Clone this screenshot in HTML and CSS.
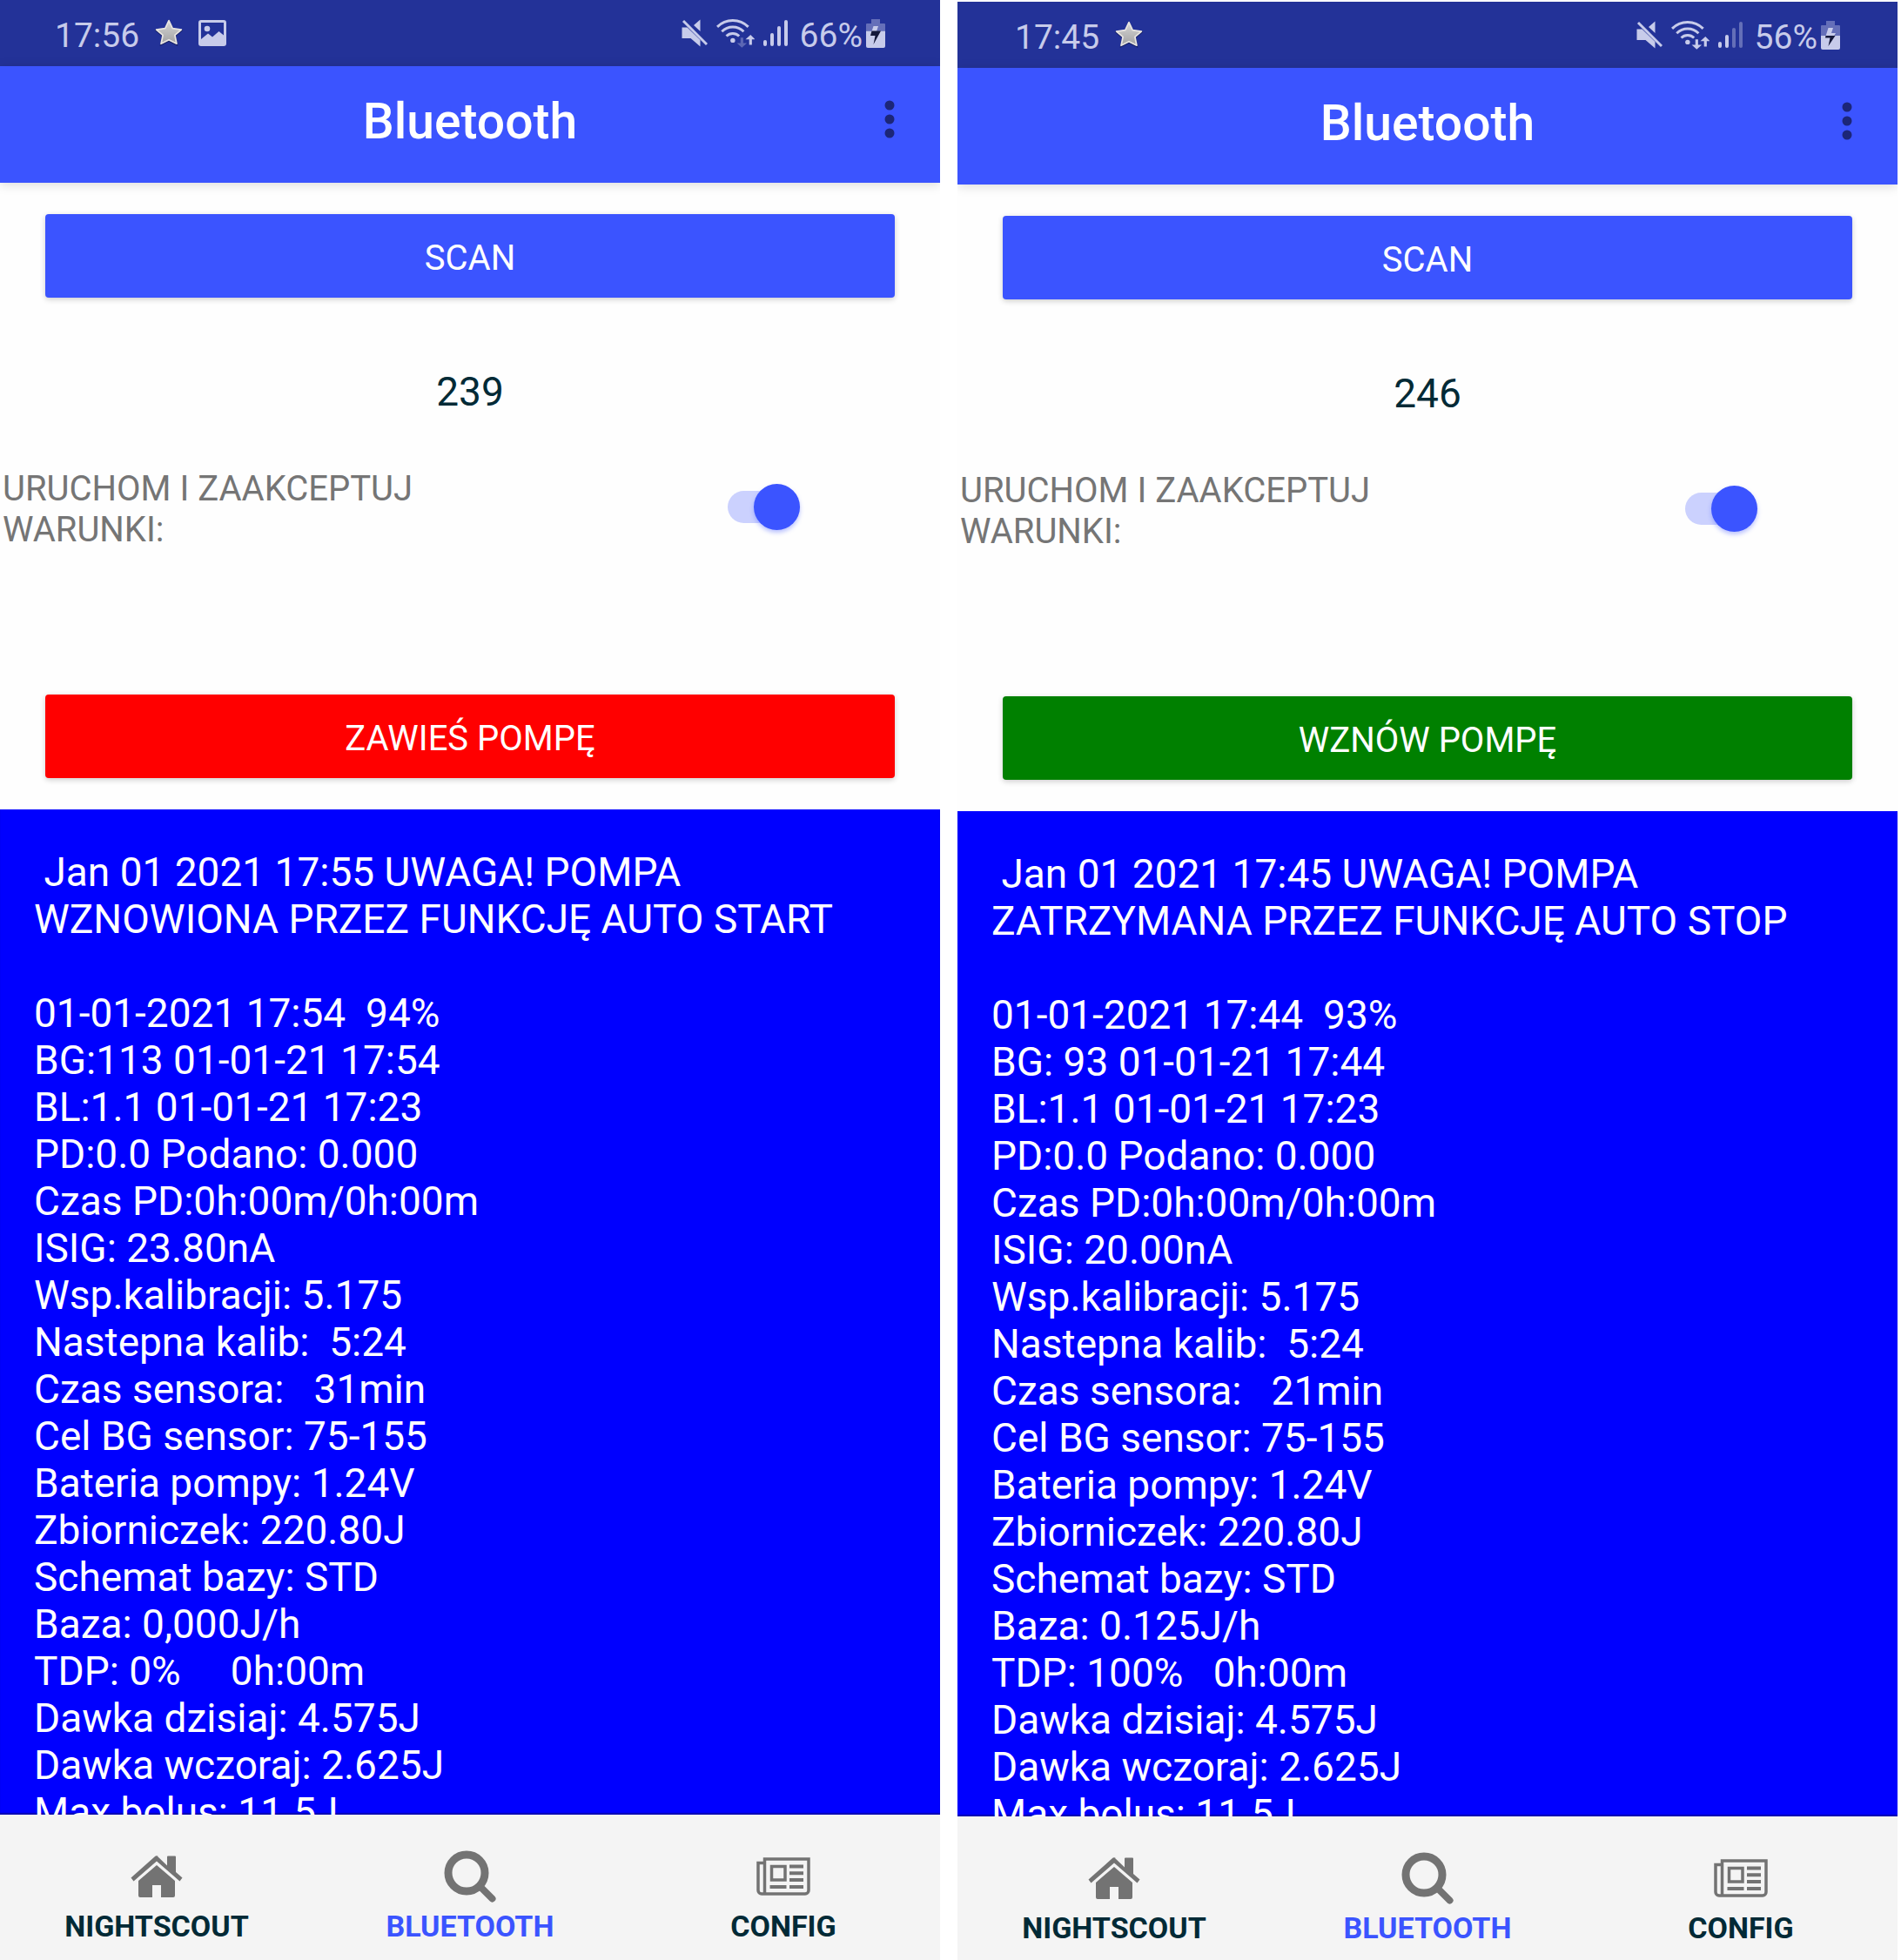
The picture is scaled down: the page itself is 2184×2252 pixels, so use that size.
FILE: index.html
```html
<!DOCTYPE html>
<html lang="pl">
<head>
<meta charset="utf-8">
<meta name="viewport" content="width=device-width, initial-scale=1">
<title>Bluetooth</title>
<link rel="stylesheet" href="styles.css">
</head>
<body>
<svg class="defs" aria-hidden="true">
  <defs>
    <linearGradient id="silver" x1="0" y1="0" x2="0" y2="1"><stop offset="0" stop-color="#d6d6d6"/><stop offset="1" stop-color="#a2a2a2"/></linearGradient>
    <symbol id="star" viewBox="1 1 30 30">
      <path d="M16 3l4.200 8.600 9.800 1.400-7.200 6.200 1.900 9.600L16 24.400l-8.700 4.400 1.900-9.600L2 13l9.800-1.400z" fill="#10184f" stroke="#10184f" stroke-width="1.500" opacity=".7"/>
      <path d="M16 2.500l4 8.500 9.500 1.300-7 6 1.900 9.200L16 23.200l-8.400 4.300 1.900-9.200-7-6L12 11z" fill="url(#silver)" stroke="#e9e6e2" stroke-width="1.600" stroke-linejoin="round"/>
    </symbol>
    <symbol id="picture" viewBox="0 0 32 30">
      <path fill-rule="evenodd" d="M3 0h26a3 3 0 0 1 3 3v24a3 3 0 0 1-3 3H3a3 3 0 0 1-3-3V3a3 3 0 0 1 3-3zM3 3v19l8-6.500 5 4 7.500-6.500 5.500 4.500V3z"/>
      <circle cx="10" cy="10" r="3.300"/>
    </symbol>
    <symbol id="mute" viewBox="0 0 30 32">
      <path d="M0.500 9.500h6L21.500 24v7.500L10.500 22h-10zM21.500 0.500V14L14 7z"/>
      <path d="M2 2l27 27" fill="none" stroke="currentColor" stroke-width="3"/>
    </symbol>
    <symbol id="wifi" viewBox="0 0 42 32">
      <g fill="none" stroke="currentColor" stroke-width="2.800"><path d="M1 9.200a24 24 0 0 1 34 0"/><path d="M6 14.300a17 17 0 0 1 24 0"/><path d="M11 19.300a10 10 0 0 1 14 0"/></g>
      <circle cx="18" cy="24" r="2.600"/>
    </symbol>
    <symbol id="down" viewBox="0 0 42 32"><path d="M26.500 21h3v6h4L28 32l-5.500-5h4z"/></symbol>
    <symbol id="up" viewBox="0 0 42 32"><path d="M36 29h3v-6h3.500L37.500 18 32 23h4z"/></symbol>
    <symbol id="dots" viewBox="0 0 12 44"><circle cx="6" cy="6" r="5.500"/><circle cx="6" cy="22" r="5.500"/><circle cx="6" cy="38" r="5.500"/></symbol>
    <symbol id="home" viewBox="0 0 60 48">
      <path d="M30 0L42 11.500V1.500a1 1 0 0 1 1-1h8a1 1 0 0 1 1 1V19L59.500 25.500 56.500 29.500 30 6.500 3.500 29.500.5 25.500 27.500 1.500Q30-.8 32.500 1.500z" />
      <path d="M30 11l21 18v17a2 2 0 0 1-2 2H35V34H25v14H11a2 2 0 0 1-2-2V29z"/>
    </symbol>
    <symbol id="search" viewBox="0 0 62 62">
      <circle cx="27" cy="27" r="21" fill="none" stroke="currentColor" stroke-width="9"/>
      <path d="M43 43l13.500 13.500" fill="none" stroke="currentColor" stroke-width="8" stroke-linecap="round"/>
    </symbol>
    <symbol id="news" viewBox="0 0 62 44">
      <g fill="none" stroke="currentColor" stroke-width="3.500"><path d="M9.500 40V2h50.500v36a4 4 0 0 1-4 4H6a4 4 0 0 1-4-4V6.500h7M9.500 41V6"/><path d="M17.500 10.500h15.500v15.500H17.500z"/></g>
      <path d="M38 8.500h16v4H38zM38 16.200h16v4H38zM38 24h16v4H38zM38 32h16v4H38zM15.500 32h19v4h-19z"/>
    </symbol>
  </defs>
</svg>
<main class="screens">
  <section class="phone">
    <div class="status">
      <div class="status-group notices"><span class="clock">17:56</span><svg class="i-star"><use href="#star"/></svg><svg class="i-picture"><use href="#picture"/></svg></div>
      <div class="status-group system">
        <svg class="i-mute"><use href="#mute"/></svg>
        <svg class="i-wifi"><use href="#wifi"/><use href="#down" opacity=".35"/><use href="#up"/></svg>
        <svg class="i-signal" viewBox="0 0 28 32"><rect x="0" y="24" width="4" height="7" rx="2"/><rect x="8" y="16" width="4" height="15" rx="2"/><rect x="16" y="8" width="4" height="23" rx="2"/><rect x="24" y="1" width="4" height="30" rx="2"/></svg>
        <span class="percent">66%</span>
        <svg class="i-battery" viewBox="0 0 22 34"><path d="M6 1h10v5h5a1 1 0 0 1 1 1v7H0V7a1 1 0 0 1 1-1h5z" opacity=".4"/><path d="M0 14.500h22V32a2 2 0 0 1-2 2H2a2 2 0 0 1-2-2z"/><path d="M8.500 9h5.500l-2 6H6.500z"/><path class="bolt" d="M6.500 14.500H17L8.500 30l2-10H5z"/></svg>
      </div>
    </div>
    <header class="appbar"><h1>Bluetooth</h1><button class="menu" aria-label="Menu"><svg><use href="#dots"/></svg></button></header>
    <div class="controls">
      <button class="action scan">SCAN</button>
      <p class="value">239</p>
      <div class="consent"><label for="run-a">URUCHOM I ZAAKCEPTUJ WARUNKI:</label><input class="switch" type="checkbox" id="run-a" checked></div>
      <button class="action suspend">ZAWIEŚ POMPĘ</button>
    </div>
    <div class="log"> Jan 01 2021 17:55 UWAGA! POMPA WZNOWIONA PRZEZ FUNKCJĘ AUTO START

01-01-2021 17:54  94%
BG:113 01-01-21 17:54
BL:1.1 01-01-21 17:23
PD:0.0 Podano: 0.000
Czas PD:0h:00m/0h:00m
ISIG: 23.80nA
Wsp.kalibracji: 5.175
Nastepna kalib:  5:24
Czas sensora:   31min
Cel BG sensor: 75-155
Bateria pompy: 1.24V
Zbiorniczek: 220.80J
Schemat bazy: STD
Baza: 0,000J/h
TDP: 0%     0h:00m
Dawka dzisiaj: 4.575J
Dawka wczoraj: 2.625J
Max bolus: 11.5J</div>
    <nav class="tabs">
      <a href="#nightscout"><svg class="i-home"><use href="#home"/></svg>NIGHTSCOUT</a>
      <a href="#bluetooth" class="current" aria-current="page"><svg class="i-search"><use href="#search"/></svg>BLUETOOTH</a>
      <a href="#config"><svg class="i-news"><use href="#news"/></svg>CONFIG</a>
    </nav>
  </section>

  <section class="phone lowered">
    <div class="status">
      <div class="status-group notices"><span class="clock">17:45</span><svg class="i-star"><use href="#star"/></svg></div>
      <div class="status-group system">
        <svg class="i-mute"><use href="#mute"/></svg>
        <svg class="i-wifi"><use href="#wifi"/><use href="#down"/><use href="#up"/></svg>
        <svg class="i-signal" viewBox="0 0 28 32"><rect x="0" y="24" width="4" height="7" rx="2"/><rect x="8" y="16" width="4" height="15" rx="2"/><g opacity=".4"><rect x="16" y="8" width="4" height="23" rx="2"/><rect x="24" y="1" width="4" height="30" rx="2"/></g></svg>
        <span class="percent">56%</span>
        <svg class="i-battery" viewBox="0 0 22 34"><path d="M6 1h10v5h5a1 1 0 0 1 1 1v11H0V7a1 1 0 0 1 1-1h5z" opacity=".4"/><path d="M0 18h22v14a2 2 0 0 1-2 2H2a2 2 0 0 1-2-2z"/><path d="M8.500 9h5.500l-2 6h5l-2 3.500H5.500z"/><path class="bolt" d="M5.500 18h11L8.500 30l2-9.500H5z"/></svg>
      </div>
    </div>
    <header class="appbar"><h1>Bluetooth</h1><button class="menu" aria-label="Menu"><svg><use href="#dots"/></svg></button></header>
    <div class="controls">
      <button class="action scan">SCAN</button>
      <p class="value">246</p>
      <div class="consent"><label for="run-b">URUCHOM I ZAAKCEPTUJ WARUNKI:</label><input class="switch" type="checkbox" id="run-b" checked></div>
      <button class="action resume">WZNÓW POMPĘ</button>
    </div>
    <div class="log"> Jan 01 2021 17:45 UWAGA! POMPA ZATRZYMANA PRZEZ FUNKCJĘ AUTO STOP

01-01-2021 17:44  93%
BG: 93 01-01-21 17:44
BL:1.1 01-01-21 17:23
PD:0.0 Podano: 0.000
Czas PD:0h:00m/0h:00m
ISIG: 20.00nA
Wsp.kalibracji: 5.175
Nastepna kalib:  5:24
Czas sensora:   21min
Cel BG sensor: 75-155
Bateria pompy: 1.24V
Zbiorniczek: 220.80J
Schemat bazy: STD
Baza: 0.125J/h
TDP: 100%   0h:00m
Dawka dzisiaj: 4.575J
Dawka wczoraj: 2.625J
Max bolus: 11.5J</div>
    <nav class="tabs">
      <a href="#nightscout"><svg class="i-home"><use href="#home"/></svg>NIGHTSCOUT</a>
      <a href="#bluetooth" class="current" aria-current="page"><svg class="i-search"><use href="#search"/></svg>BLUETOOTH</a>
      <a href="#config"><svg class="i-news"><use href="#news"/></svg>CONFIG</a>
    </nav>
  </section>
</main>
</body>
</html>
```
FILE: styles.css
```css
* { box-sizing: border-box; }

body {
  margin: 0;
  background: #fff;
  font-family: Roboto, sans-serif;
  color: #022a36;
}

button { border: 0; padding: 0; font: inherit; cursor: pointer; }

svg { display: block; fill: currentColor; flex: none; }

.defs { position: absolute; width: 0; height: 0; }

.screens {
  display: flex;
  gap: 20px;
  height: 100vh;
  padding-right: 4px;
  overflow: hidden;
}

.phone {
  display: flex;
  flex: 1 1 0;
  flex-direction: column;
  min-width: 0;
  overflow: hidden;
  background: #fefefe;
}

.lowered { margin: 2px 0 -2px; }

/* Status bar */
.status {
  display: flex;
  align-items: center;
  justify-content: space-between;
  height: 76px;
  padding: 0 63px;
  background: #233298;
  color: #c7cbea;
  font-size: 39px;
  line-height: 48px;
}
.lowered .status { padding: 0 66px; }

.status-group { display: flex; align-items: center; }
.notices { gap: 18px; }
.clock, .percent { padding-top: 5px; }

.i-star { width: 32px; height: 32px; }
.i-picture { width: 32px; height: 30px; }
.i-mute { width: 30px; height: 32px; margin-right: 10px; }
.i-wifi { width: 44px; height: 34px; margin-right: 10px; }
.i-signal { width: 28px; height: 32px; margin-right: 14px; }
.i-battery { width: 22px; height: 34px; margin-left: 4px; }
.bolt { fill: #14183a; }

/* Title bar */
.appbar {
  display: grid;
  grid-template-columns: 1fr auto 1fr;
  align-items: center;
  height: 134px;
  padding: 0 52px;
  background: #3b54ff;
  box-shadow: 0 2px 12px rgba(0, 0, 0, .15);
  z-index: 1;
}

h1 {
  grid-column: 2;
  margin: 0;
  padding-bottom: 6px;
  color: #fff;
  font-size: 57px;
  font-weight: 500;
  line-height: 66px;
}

.menu {
  justify-self: end;
  padding-bottom: 12px;
  background: none;
  color: #1c2678;
}
.menu svg { width: 12px; height: 44px; }

/* Controls */
.controls {
  display: flex;
  flex-direction: column;
  padding: 36px 0;
}

.action {
  height: 96px;
  margin: 0 52px;
  padding-top: 6px;
  border-radius: 4px;
  box-shadow: 0 2px 6px rgba(0, 0, 0, .2);
  color: #fff;
  font-size: 40px;
  line-height: 48px;
}
.scan { background: #3b54ff; }
.suspend { background: #f00; }
.resume { background: #008000; }

.value {
  margin: 81px 0 61px;
  font-size: 46px;
  line-height: 54px;
  text-align: center;
}

.consent {
  display: flex;
  align-items: flex-start;
  justify-content: space-between;
  padding: 0 161px 0 3px;
  margin-bottom: 166px;
  color: #757575;
  font-size: 40px;
  line-height: 47px;
}
.consent label { width: 534px; }

.switch {
  appearance: none;
  position: relative;
  width: 83px;
  height: 37px;
  margin: 26px 0 0;
  border-radius: 19px;
  background: #cbd1fe;
}
.switch::before {
  content: "";
  position: absolute;
  top: -8px;
  right: 0;
  width: 53px;
  height: 53px;
  border-radius: 50%;
  background: #3b54ff;
  box-shadow: 0 3px 5px rgba(59, 84, 255, .35);
}

/* Pump log */
.log {
  flex: 1 1 0;
  min-height: 0;
  padding: 45px 39px 0;
  overflow-y: auto;
  scrollbar-width: none;
  background: #00f;
  box-shadow: inset 0 -2px 1px rgba(0, 0, 0, .3);
  color: #fff;
  font-size: 46px;
  line-height: 54px;
  white-space: pre-wrap;
}

/* Bottom tabs */
.tabs {
  display: grid;
  grid-template-columns: repeat(3, 1fr);
  height: 167px;
  background: #f4f4f4;
}
.tabs a {
  display: grid;
  grid-template-rows: 66px 48px;
  align-content: start;
  align-items: center;
  justify-items: center;
  padding-top: 38px;
  color: #022a36;
  font-size: 34px;
  font-weight: 700;
  line-height: 48px;
  text-decoration: none;
}
.tabs .current { color: #3b54ff; }
.tabs svg { color: #737373; }
.i-home { width: 60px; height: 48px; }
.i-search { width: 62px; height: 62px; }
.i-news { width: 62px; height: 44px; }
```
